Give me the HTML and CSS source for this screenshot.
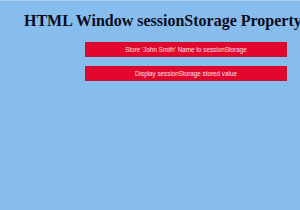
FILE: index.html
```html
<!DOCTYPE html>
<html lang="en">
<head>
    <meta charset="UTF-8">
    <title>HTML Window sessionStorage Property</title>
    <link rel="stylesheet" href="styles.css">
</head>
<body>

    <div class="page">
        <h1 class="title">HTML Window sessionStorage Property</h1>

        <div class="actions">
            <button class="btn" type="button">Store 'John Smith' Name to sessionStorage</button>
            <button class="btn" type="button">Display sessionStorage stored value</button>
        </div>
    </div>

</body>
</html>
```

FILE: styles.css
```css
*{margin:0;padding:0;box-sizing:border-box;}

html,body{
    height: 100%;
}
body{
    background-color: #86bdec;
    border-top: 1px solid #a9d1f2;
    overflow: hidden;
}

.page{
    padding-top: 11px;
}

.title{
    margin-left: 24px;

    font-family: "Liberation Serif", "Times New Roman", serif;
    font-size: 16px;
    font-weight: bold;
    color: #0c0c1e;
    white-space: nowrap;
}

.actions{
    display: flex;
    flex-direction: column;
    gap: 9px;

    margin-top: 12px;
    margin-left: 85px;
    width: 202px;
}

.btn{
    height: 15px;

    background-color: #e3072d;
    border: 1px solid #c3122f;

    color: #fbe2e6;
    font-family: "Liberation Sans", Arial, sans-serif;
    font-size: 6.3px;
    text-align: center;
    cursor: pointer;
}
```
